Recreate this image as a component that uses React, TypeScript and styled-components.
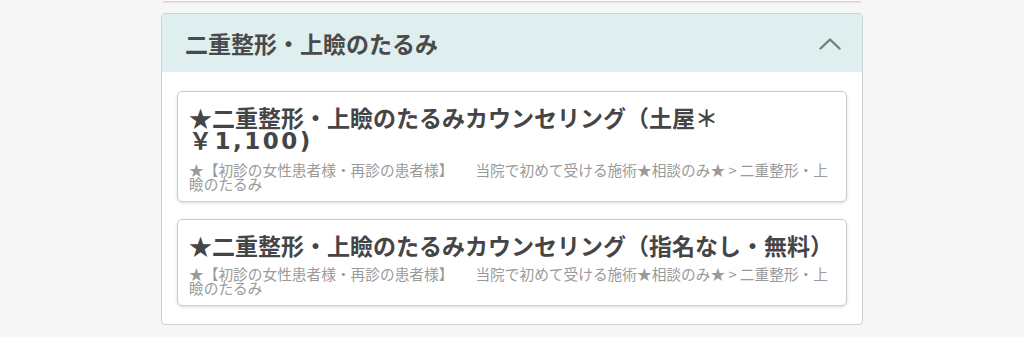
import styled, { createGlobalStyle } from 'styled-components'

const GlobalStyle = createGlobalStyle`
	body {
		margin: 0;
		background-color: #f7f7f7;
		font-family: "Noto Sans CJK JP", "Noto Sans", sans-serif;
		color: #474747;
	}
`;

const Page = styled.main`
	width: 702px;
	margin: 0 auto;
	display: flex;
	flex-direction: column;
`;

const PrevCard = styled.div`
	height: 1px;
	margin: 0 2px;
	background-color: #fff;
	border-bottom: 1px solid #cfcfcf;
	border-radius: 0 0 4px 4px;
	box-shadow: 0 1px 2px rgba(0, 0, 0, 0.08);
`;

const NextCard = styled.div`
	height: 10px;
	margin: 12px 2px 0;
	background-color: #fff;
	border-top: 1px solid #cfcfcf;
	border-radius: 4px 4px 0 0;
`;

const Panel = styled.section`
	margin-top: 11px;
	background-color: #fff;
	border: 1px solid #c9d1d1;
	border-radius: 4px;
	overflow: hidden;
`;

const PanelHeader = styled.header`
	height: 58px;
	display: flex;
	align-items: center;
	justify-content: space-between;
	padding: 0 21px 0 23px;
	background-color: #dfeeee;
`;

const PanelTitle = styled.h2`
	margin: 0;
	font-size: 23px;
	font-weight: 700;
	color: #4a4a4a;
`;

const PanelBody = styled.div`
	display: flex;
	flex-direction: column;
	gap: 17px;
	padding: 19px 15px 18px;
`;

const Card = styled.a`
	display: block;
	padding: 14px 11px 10px;
	background-color: #fff;
	border: 1px solid #cccccc;
	border-radius: 5px;
	box-shadow: 0 1px 3px rgba(0, 0, 0, 0.14);
	text-decoration: none;
	color: inherit;
`;

const CardTitle = styled.h3`
	margin: 0 0 11px;
	font-size: 23px;
	line-height: 22px;
	font-weight: 700;
	color: #454545;
`;

// the price digits are wider than the CJK font's latin set
const Price = styled.span`
	font-family: "DejaVu Sans", "Noto Sans CJK JP", sans-serif;
	letter-spacing: 2.5px;
`;

const CardNote = styled.p`
	margin: 0;
	font-size: 14.7px;
	line-height: 14px;
	color: #9a9a9a;
`;

const Chevron = () => (
	<svg width="22" height="13" viewBox="0 0 22 13" fill="none">
		<polyline points="1.5,11.5 11,2.5 20.5,11.5" stroke="#787c7c" strokeWidth="2.4" strokeLinecap="round" strokeLinejoin="round" />
	</svg>
);

const note = '★【初診の女性患者様・再診の患者様】　　当院で初めて受ける施術★相談のみ★ > 二重整形・上瞼のたるみ';

const menus = [
	{ title: '★二重整形・上瞼のたるみカウンセリング（土屋＊', price: '￥1,100)' },
	{ title: '★二重整形・上瞼のたるみカウンセリング（指名なし・無料）', price: '' },
];

const App = () => {
	return (
		<>
			<GlobalStyle />
			<Page>
				<PrevCard />
				<Panel>
					<PanelHeader>
						<PanelTitle>二重整形・上瞼のたるみ</PanelTitle>
						<Chevron />
					</PanelHeader>
					<PanelBody>
						{menus.map((menu, index) => (
							<Card key={index}>
								<CardTitle>
									{menu.title}
									{menu.price && <Price>{menu.price}</Price>}
								</CardTitle>
								<CardNote>{note}</CardNote>
							</Card>
						))}
					</PanelBody>
				</Panel>
				<NextCard />
			</Page>
		</>
	)
}

export default App
